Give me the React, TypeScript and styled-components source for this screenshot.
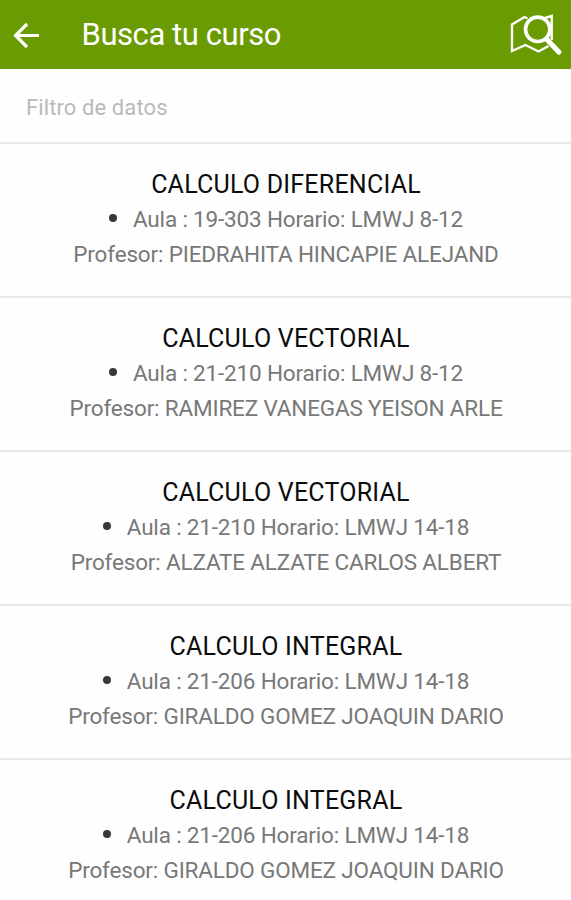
import React from "react";
import styled, { createGlobalStyle } from "styled-components";

const Global = createGlobalStyle`
  * { box-sizing: border-box; }
  body { margin: 0; background: #fff; font-family: Roboto, sans-serif; overflow: hidden; }
`;
const Screen = styled.main`
  display: flex; flex-direction: column; height: 900px; width: 571px; overflow: hidden; background: #fefefe;
`;
const TopBar = styled.header`
  display: flex; align-items: center; flex: none; height: 69px; padding: 0 8px 0 12px; background: #6b9b02; color: #fff;
`;
const Title = styled.h1`
  margin: 0 auto 0 40.5px; font-size: 31px; font-weight: 400; line-height: 69px; letter-spacing: -0.43px; white-space: nowrap;
`;
const IconButton = styled.button`
  display: flex; padding: 0; border: 0; background: none; color: inherit;
`;
const Filter = styled.input`
  flex: none; height: 75px; padding: 3px 26px 0; border: 0; border-bottom: 2px solid #e8e8e8; outline: 0;
  background: transparent; font: 400 22px Roboto, sans-serif; letter-spacing: 0.1px; color: #555;
  &::placeholder { color: #b9b9b9; opacity: 1; }
`;
const List = styled.ul`
  margin: 0; padding: 0; list-style: none;
`;
const Row = styled.li`
  height: 154.1px; padding: 23px 0 0 1px; border-bottom: 2px solid #e8e8e8; text-align: center; white-space: nowrap;
`;
const Course = styled.h2`
  margin: 0; font-size: 25px; font-weight: 400; line-height: 35px; letter-spacing: 0.22px; color: #0c0c0c;
`;
const Detail = styled.p`
  display: flex; justify-content: center; align-items: center; margin: 0;
  font-size: 22.5px; line-height: 35px; letter-spacing: -0.17px; color: #787878;
`;
const Dot = styled.span`
  width: 8px; height: 8px; margin: -4px 16px 0 0; border-radius: 50%; background: #383838;
`;

const courses = [
  ["CALCULO DIFERENCIAL", "19-303", "8-12", "PIEDRAHITA HINCAPIE ALEJAND"],
  ["CALCULO VECTORIAL", "21-210", "8-12", "RAMIREZ VANEGAS YEISON ARLE"],
  ["CALCULO VECTORIAL", "21-210", "14-18", "ALZATE ALZATE CARLOS ALBERT"],
  ["CALCULO INTEGRAL", "21-206", "14-18", "GIRALDO GOMEZ JOAQUIN DARIO"],
  ["CALCULO INTEGRAL", "21-206", "14-18", "GIRALDO GOMEZ JOAQUIN DARIO"],
];

export default function App() {
  return (
    <Screen>
      <Global />
      <TopBar>
        <IconButton aria-label="Volver">
          <svg width="29" height="29" viewBox="0 0 29 29" fill="none" stroke="currentColor" strokeWidth="3.2">
            <path d="M27 15.5H4M15 4 3.5 15.5 15 27" />
          </svg>
        </IconButton>
        <Title>Busca tu curso</Title>
        <IconButton aria-label="Mapa">
          <svg width="53" height="45" viewBox="0 0 53 45" fill="none" stroke="currentColor" strokeWidth="2.4">
            <path d="M17.5 6.5 14.5 5 2 12.5V39L15.5 33l13 6.5L38.5 34M35 6 41.7 3.8V28" />
            <circle cx="27.7" cy="17.3" r="12.2" strokeWidth="3.6" />
            <path d="M36.5 27 49 40.3" strokeWidth="5" strokeLinecap="round" />
          </svg>
        </IconButton>
      </TopBar>
      <Filter placeholder="Filtro de datos" />
      <List>
        {courses.map(([name, room, time, teacher], i) => (
          <Row key={i}>
            <Course>{name}</Course>
            <Detail><Dot />Aula : {room} Horario: LMWJ {time}</Detail>
            <Detail>Profesor: {teacher}</Detail>
          </Row>
        ))}
      </List>
    </Screen>
  );
}
